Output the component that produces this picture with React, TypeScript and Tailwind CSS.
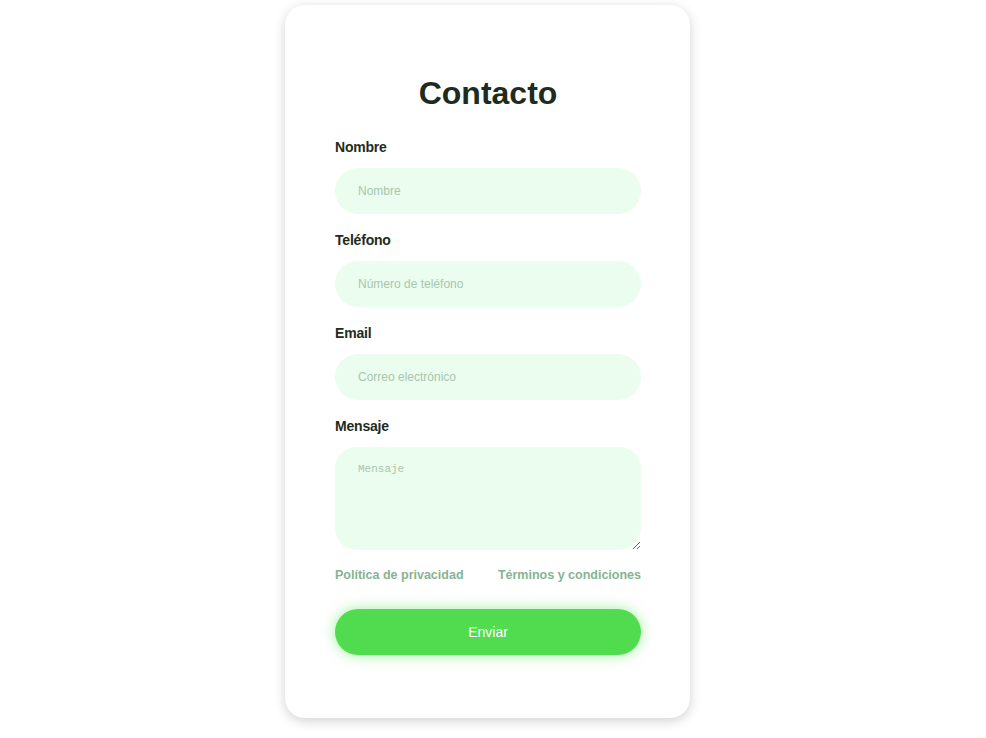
import React from 'react';

const fields = [
  { label: 'Nombre', placeholder: 'Nombre', type: 'text' },
  { label: 'Teléfono', placeholder: 'Número de teléfono', type: 'tel' },
  { label: 'Email', placeholder: 'Correo electrónico', type: 'email' },
];

export default function App() {
  return (
    <div className="min-h-screen bg-white flex justify-center pr-[11px] pt-[5px] font-['Liberation_Sans',Arial,sans-serif]">
      <form
        className="w-[405px] h-[713px] bg-white rounded-[20px] shadow-[0_3px_12px_rgba(0,0,0,0.18)] pl-[50px] pr-[49px] pt-[70px] flex flex-col"
        onSubmit={(e) => e.preventDefault()}
      >
        <h2 className="text-[32px] leading-[37px] font-bold text-center text-[#1e2b20]">Contacto</h2>

        <div className="mt-[25px] flex flex-col">
          {fields.map((f) => (
            <div key={f.label} className="flex flex-col mb-[16px]">
              <label className="text-sm leading-5 font-bold text-[#1e2b20] tracking-[-0.2px]">{f.label}</label>
              <input
                type={f.type}
                placeholder={f.placeholder}
                className="mt-[11px] h-[46px] rounded-full bg-[#ebfdee] px-[23px] text-[12px] text-[#1e2b20] placeholder:text-[#a9c6ad] outline-none font-['Liberation_Sans',Arial,sans-serif]"
              />
            </div>
          ))}

          <div className="flex flex-col">
            <label className="text-sm leading-5 font-bold text-[#1e2b20] tracking-[-0.2px]">Mensaje</label>
            <textarea
              placeholder="Mensaje"
              className="mt-[11px] h-[103px] rounded-[22px] bg-[#ebfdee] px-[23px] py-[14px] text-[11px] text-[#1e2b20] placeholder:text-[#a9c6ad] outline-none font-['Liberation_Mono',monospace]"
            />
          </div>
        </div>

        <div className="mt-[17px] flex justify-between text-[12.5px] leading-[16px] font-bold text-[#84b492]">
          <a href="#">Política de privacidad</a>
          <a href="#">Términos y condiciones</a>
        </div>

        <button
          type="submit"
          className="mt-[26px] h-[46px] rounded-full bg-[#50dc4e] text-white text-[14px] shadow-[0_0_14px_rgba(80,230,80,0.55)]"
        >
          Enviar
        </button>
      </form>
    </div>
  );
}
